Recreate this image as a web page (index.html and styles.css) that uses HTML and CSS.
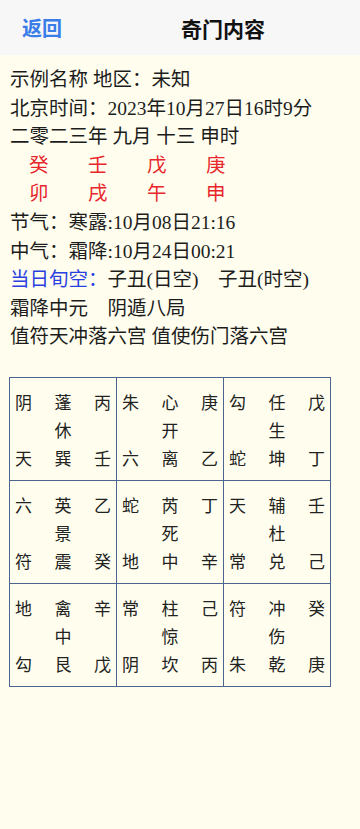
FILE: index.html
```html
<!DOCTYPE html>
<html lang="zh-CN">
<head>
    <meta charset="UTF-8">
    <meta name="viewport" content="width=device-width, initial-scale=1.0">
    <title>奇门内容</title>
    <link rel="stylesheet" href="styles.css">
</head>
<body>
    <div class="navbar">
        <a class="back" href="#">返回</a>
        <div class="title">奇门内容</div>
    </div>

    <div class="info">
        <div>示例名称 地区：未知</div>
        <div>北京时间：2023年10月27日16时9分</div>
        <div>二零二三年 九月 十三 申时</div>
        <div class="ganzhi"><span>癸</span><span>壬</span><span>戊</span><span>庚</span></div>
        <div class="ganzhi"><span>卯</span><span>戌</span><span>午</span><span>申</span></div>
        <div>节气：寒露:10月08日21:16</div>
        <div>中气：霜降:10月24日00:21</div>
        <div><span class="blue">当日旬空：</span>子丑(日空)&nbsp;&nbsp;&nbsp;&nbsp;子丑(时空)</div>
        <div>霜降中元&nbsp;&nbsp;&nbsp;&nbsp;阴遁八局</div>
        <div>值符天冲落六宫 值使伤门落六宫</div>
    </div>

    <div class="pan">
        <div class="gong">
            <span>阴</span><span>蓬</span><span>丙</span>
            <span></span><span>休</span><span></span>
            <span>天</span><span>巽</span><span>壬</span>
        </div>
        <div class="gong">
            <span>朱</span><span>心</span><span>庚</span>
            <span></span><span>开</span><span></span>
            <span>六</span><span>离</span><span>乙</span>
        </div>
        <div class="gong">
            <span>勾</span><span>任</span><span>戊</span>
            <span></span><span>生</span><span></span>
            <span>蛇</span><span>坤</span><span>丁</span>
        </div>

        <div class="gong">
            <span>六</span><span>英</span><span>乙</span>
            <span></span><span>景</span><span></span>
            <span>符</span><span>震</span><span>癸</span>
        </div>
        <div class="gong">
            <span>蛇</span><span>芮</span><span>丁</span>
            <span></span><span>死</span><span></span>
            <span>地</span><span>中</span><span>辛</span>
        </div>
        <div class="gong">
            <span>天</span><span>辅</span><span>壬</span>
            <span></span><span>杜</span><span></span>
            <span>常</span><span>兑</span><span>己</span>
        </div>

        <div class="gong">
            <span>地</span><span>禽</span><span>辛</span>
            <span></span><span>中</span><span></span>
            <span>勾</span><span>艮</span><span>戊</span>
        </div>
        <div class="gong">
            <span>常</span><span>柱</span><span>己</span>
            <span></span><span>惊</span><span></span>
            <span>阴</span><span>坎</span><span>丙</span>
        </div>
        <div class="gong">
            <span>符</span><span>冲</span><span>癸</span>
            <span></span><span>伤</span><span></span>
            <span>朱</span><span>乾</span><span>庚</span>
        </div>
    </div>
</body>
</html>
```

FILE: styles.css
```css
body {
    margin: 0;
    background: #fffeee;
    color: #1c1c1c;
    font-family: "Liberation Serif", "Noto Sans CJK SC", serif;
}
.navbar {
    height: 55px;
    background: #f7f7f8;
    display: flex;
    align-items: center;
    font-family: "Noto Sans CJK SC", sans-serif;
}
.back {
    width: 86px;
    padding-left: 22px;
    box-sizing: border-box;
    color: #3a7de6;
    font-size: 20px;
    font-weight: 600;
    text-decoration: none;
}
.title {
    flex: 1;
    text-align: center;
    font-size: 21px;
    font-weight: 600;
    color: #111;
}
.info {
    padding: 11px 10px 0 10px;
    font-size: 19.5px;
    line-height: 28.6px;
}
.ganzhi {
    display: flex;
    padding-left: 19px;
    color: #e8272d;
}
.ganzhi span {
    width: 59px;
}
.blue {
    color: #2b3fe0;
}
.pan {
    margin: 25px 0 0 9px;
    width: 322px;
    display: grid;
    grid-template-columns: repeat(3, 1fr);
    border-top: 1px solid #4c6590;
    border-left: 1px solid #4c6590;
    box-sizing: border-box;
}
.gong {
    display: grid;
    grid-template-columns: 1em 1fr 1em;
    justify-items: center;
    padding: 10px 5px;
    height: 103px;
    box-sizing: border-box;
    border-right: 1px solid #4c6590;
    border-bottom: 1px solid #4c6590;
    font-family: "Noto Sans CJK SC", sans-serif;
    font-size: 17px;
    line-height: 28px;
    color: #222;
}
.gong span {
    height: 28px;
}
```
